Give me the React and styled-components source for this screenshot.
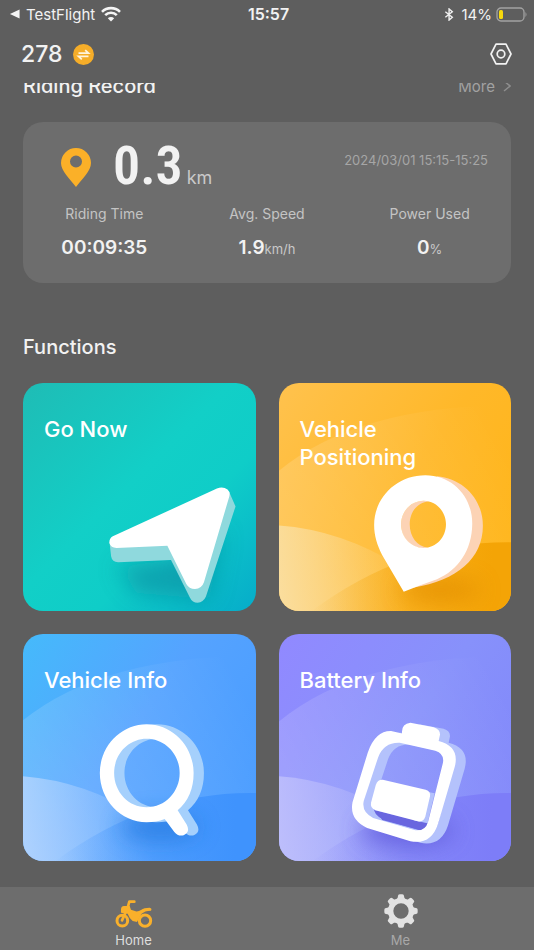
import React from "react";
import styled, { createGlobalStyle } from "styled-components";

const GlobalStyle = createGlobalStyle`
  *, *::before, *::after { box-sizing: border-box; }
  body {
    margin: 0;
    background: #5e5e5e;
    color: #f2f2f2;
    font-family: Inter, "Liberation Sans", sans-serif;
  }
  button { font: inherit; color: inherit; background: none; border: 0; padding: 0; cursor: pointer; }
  a { color: inherit; text-decoration: none; }
  h1, h2, p, dl, dd { margin: 0; }
  svg { display: block; flex: none; }
`;

const Page = styled.div`
  min-height: 100vh;
  display: flex;
  flex-direction: column;
`;

const StatusBar = styled.div`
  display: grid;
  grid-template-columns: 1fr auto 1fr;
  align-items: center;
  height: 28px;
  padding: 0 6px 0 9px;
  font-size: 15px;
`;

const StatusGroup = styled.div`
  display: flex;
  align-items: center;
  gap: ${(p) => (p.$end ? "4px" : "6px")};
  justify-content: ${(p) => (p.$end ? "flex-end" : "flex-start")};
`;

const Clock = styled.time`
  font-size: 16px;
  font-weight: 600;
`;

const Header = styled.header`
  display: flex;
  align-items: center;
  justify-content: space-between;
  height: 55px;
  padding: 0 22px 3px 21px;
`;

const VehicleSwitch = styled.button`
  display: flex;
  align-items: center;
  gap: 11px;
  font-size: 23px;
  font-weight: 500;
`;

const Content = styled.main`
  flex: 1;
  overflow: hidden;
  padding: 0 23px 24px;
`;

const SectionHead = styled.div`
  display: flex;
  align-items: center;
  justify-content: space-between;
  height: 28px;
  margin-top: -11px;
`;

const SectionTitle = styled.h2`
  font-size: 20px;
  line-height: 28px;
  font-weight: 500;
`;

const MoreLink = styled.a`
  display: flex;
  align-items: center;
  gap: 8px;
  color: #a2a2a2;
  font-size: 15px;
`;

const RecordCard = styled.section`
  margin: 22px 0 50px;
  height: 161px;
  border-radius: 20px;
  background: #6d6d6d;
  padding-top: 16px;
`;

const RecordTop = styled.div`
  display: flex;
  align-items: flex-start;
  justify-content: space-between;
  height: 67px;
  padding: 0 23px 0 38px;
`;

const Distance = styled.p`
  display: flex;
  align-items: baseline;
  line-height: 56px;
`;

const DistancePin = styled.svg`
  align-self: flex-start;
  margin: 10px 22px 0 0;
`;

const DistanceValue = styled.strong`
  font-family: "Roboto Condensed", "Liberation Sans Narrow", "Liberation Sans", sans-serif;
  font-size: 54px;
  font-weight: 600;
`;

const DistanceUnit = styled.span`
  margin-left: 4px;
  color: #c9c9c9;
  font-size: 18px;
`;

const RecordTime = styled.time`
  color: #a6a6a6;
  font-size: 13px;
  line-height: 44px;
`;

const Stats = styled.dl`
  display: grid;
  grid-template-columns: repeat(3, 1fr);
  text-align: center;
`;

const StatLabel = styled.dt`
  color: #c4c4c4;
  font-size: 14px;
  line-height: 18px;
`;

const StatValue = styled.dd`
  padding-top: 11px;
  font-size: 19px;
  line-height: 28px;
  font-weight: 600;
`;

const StatUnit = styled.span`
  color: #c9c9c9;
  font-size: 13px;
  font-weight: 400;
`;

const Tiles = styled.div`
  display: grid;
  grid-template-columns: 1fr 1fr;
  gap: 23px;
  margin-top: 22px;
`;

const Tile = styled.button`
  position: relative;
  display: flex;
  aspect-ratio: 233 / 228;
  overflow: hidden;
  border-radius: 20px;
  background: ${(p) => p.$fill};
`;

const TileArt = styled.svg`
  position: absolute;
  inset: 0;
  width: 100%;
  height: 100%;
`;

const TileName = styled.span`
  position: relative;
  max-width: 160px;
  padding: 32px 0 0 21px;
  color: #fff;
  font-size: 22px;
  line-height: 28px;
  font-weight: 500;
  text-align: left;
`;

const TabBar = styled.nav`
  display: grid;
  grid-template-columns: 1fr 1fr;
  height: 63px;
  background: #6d6d6d;
`;

const Tab = styled.a`
  display: flex;
  flex-direction: column;
  align-items: center;
  justify-content: flex-end;
  gap: 3px;
  padding-bottom: 1px;
  color: ${(p) => (p.$active ? "#dedede" : "#a8a8a8")};
  font-size: 13px;
  line-height: 18px;
`;

function BackArrow() {
  return <svg width="11" height="12" viewBox="0 0 12 12" aria-hidden="true"><path d="M1 6 11.500 1v10z" fill="#f4f4f4" /></svg>;
}

function Wifi() {
  return (
    <svg width="20" height="16" viewBox="0 0 20 16" fill="none" stroke="#f4f4f4" strokeWidth="2.600" aria-hidden="true">
      <path d="M1 5.800a12.800 12.800 0 0 1 18 0" />
      <path d="M4.200 9.200a8.200 8.200 0 0 1 11.600 0" />
      <path d="M10 15.500 6.800 12.200a4.600 4.600 0 0 1 6.400 0z" fill="#f4f4f4" stroke="none" />
    </svg>
  );
}

function Bluetooth() {
  return (
    <svg width="14" height="13" viewBox="-1 0 14 14" fill="none" stroke="#f0f0f0" strokeWidth="1.500" aria-hidden="true">
      <path d="m1 4 7.500 6L5 13V1l3.500 3L1 10" />
    </svg>
  );
}

function PhoneBattery() {
  return (
    <svg width="32" height="15" viewBox="0 0 32 15" fill="none" aria-hidden="true">
      <rect x="1" y="1" width="27" height="13" rx="4" stroke="#a3a3a3" strokeWidth="1.300" />
      <rect x="3" y="3" width="4" height="9" rx="1.500" fill="#f8d90c" />
      <path d="M29.500 5q2 2.500 0 5z" fill="#a3a3a3" />
    </svg>
  );
}

function SwapBadge() {
  return (
    <svg width="21" height="21" viewBox="0 0 21 21" aria-hidden="true">
      <circle cx="10.500" cy="10.500" r="10.500" fill="#f5ad29" />
      <path d="M5.500 9.200h10l-3.300-3M15.500 12.300h-10l3.300 3" fill="none" stroke="#fff4de" strokeWidth="1.700" />
    </svg>
  );
}

function HexNut() {
  return (
    <svg width="22" height="22" viewBox="0 0 22 22" fill="none" stroke="#f2f2f2" strokeWidth="1.700" strokeLinejoin="round" aria-hidden="true">
      <path d="M6 1.200h10L21 11l-5 9.800H6L1 11z" />
      <circle cx="11" cy="11" r="3.800" />
    </svg>
  );
}

function Chevron() {
  return <svg width="8" height="12" viewBox="0 0 8 12" fill="none" stroke="#8e8e8e" strokeWidth="1.500" aria-hidden="true"><path d="m1 1 6 5-6 5" /></svg>;
}

function Waves({ id, hill, ridge }) {
  return (
    <>
      <defs>
        <linearGradient id={`${id}-swell`} x1="0" y1="0.500" x2="1" y2="0">
          <stop offset="0" stopColor="#fff" stopOpacity="0.160" />
          <stop offset="0.900" stopColor="#fff" stopOpacity="0" />
        </linearGradient>
        <linearGradient id={`${id}-hill`} x1="0" y1="0.600" x2="1" y2="0.500">
          <stop offset="0" stopColor={hill} stopOpacity="0.900" />
          <stop offset="0.850" stopColor={hill} stopOpacity="0" />
        </linearGradient>
        <linearGradient id={`${id}-ridge`} x1="0" y1="0.500" x2="0.900" y2="0.500">
          <stop offset="0" stopColor={ridge} stopOpacity="0" />
          <stop offset="0.300" stopColor={ridge} stopOpacity="0.300" />
          <stop offset="1" stopColor={ridge} stopOpacity="1" />
        </linearGradient>
        <filter id={`${id}-blur`} x="-80%" y="-150%" width="260%" height="400%">
          <feGaussianBlur stdDeviation="34" />
        </filter>
      </defs>
      <path d="M30 306Q270 105 738 105V726H30z" fill={`url(#${id}-swell)`} />
      <path d="M30 466Q220 478 400 590L480 726H30z" fill={`url(#${id}-hill)`} />
      <path d="M130 726Q420 510 740 517V726z" fill={`url(#${id}-ridge)`} />
    </>
  );
}

function ArrowArt() {
  return (
    <TileArt viewBox="39 38 699 684" aria-hidden="true">
      <defs>
        <filter id="go-blur" x="-50%" y="-80%" width="200%" height="260%">
          <feGaussianBlur stdDeviation="34" />
        </filter>
      </defs>
      <path d="M320 590 480 570 640 480 600 690 380 670z" fill="#079aa9" opacity="0.800" filter="url(#go-blur)" />
      <path d="M299 516 304 560Q307 577 325 577L484 570 541 684Q548 699 564 699 581 698 589 680L678 409 659 366z" fill="#8fd9dd" />
      <path d="M309 499 622 355Q640 348 654 358 663 366 659 380L583 637Q576 657 556 657 538 657 530 642L473 527 320 534Q303 534 299 520 297 506 309 499z" fill="#fff" />
    </TileArt>
  );
}

function PinArt() {
  return (
    <TileArt viewBox="35 38 699 684" aria-hidden="true">
      <Waves id="pos" hill="#fae0a5" ridge="#f4a406" />
      <ellipse cx="520" cy="660" rx="120" ry="36" fill="#e39000" opacity="0.800" filter="url(#pos-blur)" />
      <path d="M510 318C590 325 648 388 648 467 648 565 570 632 440 653L540 580 570 430z" fill="#fcd3b5" />
      <path d="M486 394C440 382 402 420 402 463 402 508 438 542 482 533 450 530 428 500 428 463 428 425 452 396 486 394z" fill="#fcd3b5" />
      <path fillRule="evenodd" d="M410 666 345 555C330 525 321 497 321 465 321 383 388 315 475 315 557 315 617 380 616 462 615 540 575 600 510 628Q460 645 410 666zM470 392C432 392 402 424 402 463S432 534 470 534 537 502 537 463 507 392 470 392z" fill="#fff" />
    </TileArt>
  );
}

function MagnifierArt() {
  const shape = "M411 310C333 310 270 376 270 457S333 605 411 605Q440 605 465 595L494 634Q505 648 522 644 543 635 531 612L504 569Q552 528 552 457C552 376 489 310 411 310zM411 354C466 354 510 400 510 457S466 560 411 560 313 514 313 457 356 354 411 354z";
  return (
    <TileArt viewBox="39 39 699 684" aria-hidden="true">
      <Waves id="info" hill="#b5d5fe" ridge="#3f93fd" />
      <ellipse cx="450" cy="620" rx="120" ry="40" fill="#2177dc" opacity="0.700" filter="url(#info-blur)" />
      <path fillRule="evenodd" d={shape} transform="translate(31 0)" fill="#a5d0fc" />
      <path fillRule="evenodd" d={shape} fill="#fff" />
    </TileArt>
  );
}

function BatteryArt() {
  const frame = "M372 331 405 338Q402 310 430 306L500 319Q520 325 519 342L515 361Q580 378 563 440L513 610Q492 674 430 662L300 622Q246 597 256 545L302 395Q325 330 372 331zM398 366 505 390Q535 400 527 430L483 604Q475 632 445 629L318 592Q282 574 290 540L333 410Q350 364 398 366z";
  return (
    <TileArt viewBox="35 39 699 684" aria-hidden="true">
      <Waves id="bat" hill="#c0c1fc" ridge="#7d7df8" />
      <ellipse cx="420" cy="630" rx="140" ry="50" fill="#5d57d8" opacity="0.700" filter="url(#bat-blur)" />
      <path d="M318 568 480 608 474 628 330 595z" fill="#6966df" />
      <path fillRule="evenodd" d={frame} transform="translate(30 5)" fill="#b4c2fc" />
      <path d="M465 510 503 518 482 608 440 600z" fill="#b4c2fc" />
      <path d="M330 572 482 610 474 632 345 598z" fill="#6966df" />
      <path fillRule="evenodd" d={frame} fill="#fff" />
      <path d="M347 477 476 507Q492 512 489 527L475 588Q469 606 452 602L325 569Q308 562 312 545L326 493Q331 476 347 477z" fill="#fff" />
    </TileArt>
  );
}

function Motorbike() {
  return (
    <svg width="38" height="29" viewBox="103 49 114 87" fill="none" stroke="#f9b02b" aria-hidden="true">
      <circle cx="125" cy="114" r="16" strokeWidth="9" />
      <circle cx="193" cy="114" r="17" strokeWidth="9" />
      <path d="M161 57h-15l-5 18-17 38" strokeWidth="8" strokeLinecap="round" strokeLinejoin="round" />
      <path d="M121 79q1-9 9-9h17l4 11 14 5q9 1 16-4 9-7 26-7 8 2 4 9-19 0-29 10l-8 14-5 10-13-3q-10-8-15-22l-20-3z" fill="#f9b02b" stroke="none" />
    </svg>
  );
}

function Gear() {
  const teeth = [0, 45, 90, 135, 180, 225, 270, 315];
  return (
    <svg width="34" height="34" viewBox="0 0 102 102" fill="#e2e2e2" aria-hidden="true">
      <circle cx="51" cy="51" r="31" fill="none" stroke="#e2e2e2" strokeWidth="16" />
      {teeth.map((angle) => (
        <path key={angle} d="M36 18Q42 14 42 6 42 1 47 1H55Q60 1 60 6 60 14 66 18z" transform={`rotate(${angle} 51 51)`} />
      ))}
    </svg>
  );
}

const stats = [
  { label: "Riding Time", value: "00:09:35", unit: "" },
  { label: "Avg. Speed", value: "1.9", unit: "km/h" },
  { label: "Power Used", value: "0", unit: "%" },
];

const tiles = [
  { name: "Go Now", Art: ArrowArt, fill: "linear-gradient(135deg, #1fbcb5 0%, #12cfc7 45%, #0fcdc8 65%, #06acca 100%)" },
  { name: "Vehicle Positioning", Art: PinArt, fill: "linear-gradient(125deg, #ffc24e 0%, #ffb829 50%, #ffb414 100%)" },
  { name: "Vehicle Info", Art: MagnifierArt, fill: "linear-gradient(125deg, #45bafb 0%, #55a3ff 45%, #469aff 100%)" },
  { name: "Battery Info", Art: BatteryArt, fill: "linear-gradient(125deg, #9189ff 0%, #8791fb 50%, #8085fa 100%)" },
];

export default function App() {
  return (
    <Page>
      <GlobalStyle />
      <StatusBar>
        <StatusGroup>
          <BackArrow />
          <span>TestFlight</span>
          <Wifi />
        </StatusGroup>
        <Clock>15:57</Clock>
        <StatusGroup $end>
          <Bluetooth />
          <span>14%</span>
          <PhoneBattery />
        </StatusGroup>
      </StatusBar>
      <Header>
        <VehicleSwitch>
          278
          <SwapBadge />
        </VehicleSwitch>
        <button aria-label="Settings"><HexNut /></button>
      </Header>
      <Content>
        <SectionHead>
          <SectionTitle>Riding Record</SectionTitle>
          <MoreLink href="#records">More <Chevron /></MoreLink>
        </SectionHead>
        <RecordCard>
          <RecordTop>
            <Distance>
              <DistancePin width="30" height="39" viewBox="0 0 30 39" aria-hidden="true">
                <path fillRule="evenodd" d="M15 39C9 31 0 23 0 15a15 15 0 0 1 30 0c0 8-9 16-15 24zM15 7.500a6 6 0 1 0 0 12 6 6 0 0 0 0-12z" fill="#fbb028" />
              </DistancePin>
              <DistanceValue>0.3</DistanceValue>
              <DistanceUnit>km</DistanceUnit>
            </Distance>
            <RecordTime>2024/03/01 15:15-15:25</RecordTime>
          </RecordTop>
          <Stats>
            {stats.map((s) => (
              <div key={s.label}>
                <StatLabel>{s.label}</StatLabel>
                <StatValue>{s.value}<StatUnit>{s.unit}</StatUnit></StatValue>
              </div>
            ))}
          </Stats>
        </RecordCard>
        <SectionTitle>Functions</SectionTitle>
        <Tiles>
          {tiles.map(({ name, Art, fill }) => (
            <Tile key={name} $fill={fill}>
              <Art />
              <TileName>{name}</TileName>
            </Tile>
          ))}
        </Tiles>
      </Content>
      <TabBar>
        <Tab href="#home" $active aria-current="page"><Motorbike />Home</Tab>
        <Tab href="#me"><Gear />Me</Tab>
      </TabBar>
    </Page>
  );
}
